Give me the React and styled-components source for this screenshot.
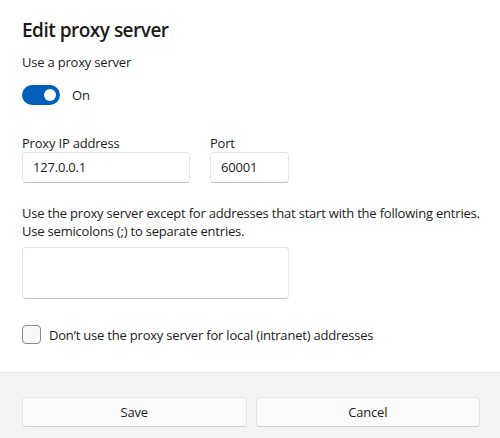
import React from "react";
import styled, { createGlobalStyle } from "styled-components";

const Global = createGlobalStyle`
  html, body {
    margin: 0;
    padding: 0;
    background: #ffffff;
  }
  body {
    font-family: "Open Sans", "Noto Sans", "Liberation Sans", sans-serif;
    letter-spacing: -0.2px;
    color: #1b1b1b;
  }
`;

const Dialog = styled.div`
  width: 500px;
  height: 438px;
  display: flex;
  flex-direction: column;
  background: #ffffff;
`;

const Body = styled.div`
  flex: 1;
  padding: 16px 22px 0;
  display: flex;
  flex-direction: column;
  align-items: flex-start;
`;

const Title = styled.h2`
  margin: 0;
  font-size: 19px;
  font-weight: 600;
  line-height: 28px;
  letter-spacing: -0.5px;
  color: #1a1a1a;
`;

const Label = styled.div`
  font-size: 13px;
  line-height: 18px;
  margin-top: ${(p) => p.mt || 0}px;
  color: #1b1b1b;
`;

const ToggleRow = styled.div`
  display: flex;
  align-items: center;
  gap: 12px;
  margin-top: 14px;
  font-size: 13px;
`;

const Switch = styled.div`
  width: 38px;
  height: 20px;
  border-radius: 10px;
  background: ${(p) => (p.on ? "#005fb8" : "#ffffff")};
  position: relative;
  &::after {
    content: "";
    position: absolute;
    top: 4px;
    left: ${(p) => (p.on ? "22px" : "4px")};
    width: 12px;
    height: 12px;
    border-radius: 50%;
    background: #ffffff;
  }
`;

const FieldRow = styled.div`
  display: flex;
  gap: 20px;
  margin-top: 29px;
`;

const Field = styled.div`
  display: flex;
  flex-direction: column;
`;

const Input = styled.div`
  box-sizing: border-box;
  width: ${(p) => p.w}px;
  height: ${(p) => p.h || 31}px;
  border: 1px solid #e5e5e5;
  border-bottom-color: #c4c4c4;
  border-radius: 4px;
  background: #ffffff;
  font-size: 13px;
  line-height: 29px;
  padding: 0 10px;
  color: #1b1b1b;
`;

const Description = styled.p`
  margin: 21px 0 0;
  font-size: 13px;
  line-height: 18px;
  white-space: nowrap;
  color: #1b1b1b;
`;

const Area = styled(Input)`
  margin-top: 7px;
`;

const CheckRow = styled.label`
  display: flex;
  align-items: center;
  gap: 8px;
  margin-top: 26px;
  font-size: 13px;
`;

const Box = styled.span`
  box-sizing: border-box;
  width: 19px;
  height: 19px;
  border: 1px solid #8a8a8a;
  border-radius: 4px;
  background: #f9f9f9;
`;

const Footer = styled.div`
  height: 66px;
  background: #f3f3f3;
  border-top: 1px solid #e5e5e5;
  display: grid;
  grid-template-columns: 1fr 1fr;
  gap: 9px;
  padding: 24px 20px 0 22px;
  box-sizing: border-box;
  align-items: start;
`;

const Button = styled.button`
  height: 30px;
  border: 1px solid #e5e5e5;
  border-bottom-color: #d0d0d0;
  border-radius: 4px;
  background: #fbfbfb;
  font-family: inherit;
  letter-spacing: inherit;
  font-size: 13px;
  color: #1b1b1b;
`;

export default function App() {
  return (
    <Dialog>
      <Global />
      <Body>
        <Title>Edit proxy server</Title>
        <Label mt={9}>Use a proxy server</Label>
        <ToggleRow>
          <Switch on />
          <span>On</span>
        </ToggleRow>
        <FieldRow>
          <Field>
            <Label>Proxy IP address</Label>
            <Input w={168}>127.0.0.1</Input>
          </Field>
          <Field>
            <Label>Port</Label>
            <Input w={79}>60001</Input>
          </Field>
        </FieldRow>
        <Description>
          Use the proxy server except for addresses that start with the following entries.
          <br />
          Use semicolons (;) to separate entries.
        </Description>
        <Area w={267} h={52} />
        <CheckRow>
          <Box />
          <span>Don’t use the proxy server for local (intranet) addresses</span>
        </CheckRow>
      </Body>
      <Footer>
        <Button>Save</Button>
        <Button>Cancel</Button>
      </Footer>
    </Dialog>
  );
}
